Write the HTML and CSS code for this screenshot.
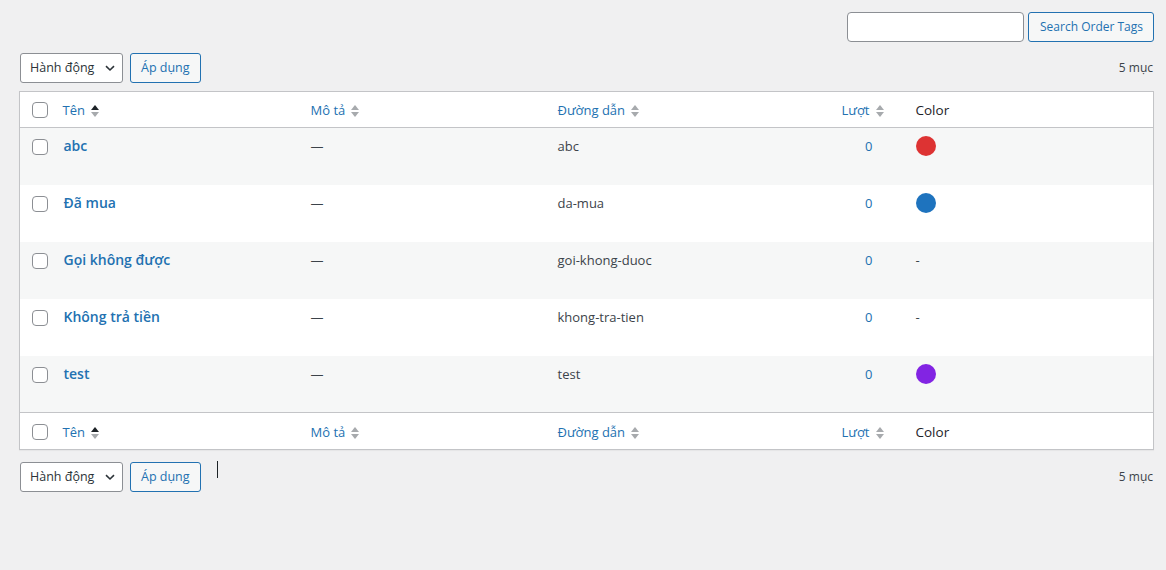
FILE: index.html
```html
<!DOCTYPE html>
<html lang="vi">
<head>
<meta charset="utf-8">
<title>Order Tags</title>
<link rel="stylesheet" href="styles.css">
</head>
<body>
<div class="wrap">
  <div class="search-box">
    <input class="search-input" type="search">
    <button class="button">Search Order Tags</button>
  </div>

  <div class="tablenav top">
    <div class="actions">
      <div class="select"><span>Hành động</span>
        <svg class="chev" width="10" height="10" viewBox="0 0 10 10"><path d="M1 3.2 5 7 9 3.2" fill="none" stroke="#2c3338" stroke-width="1.6"/></svg>
      </div>
      <button class="button apply">Áp dụng</button>
    </div>
    <div class="count">5 mục</div>
  </div>

  <table class="list">
    <colgroup>
      <col class="c-check"><col class="c-name"><col class="c-desc"><col class="c-slug"><col class="c-posts"><col class="c-color">
    </colgroup>
    <thead>
      <tr>
        <th class="check"><span class="cb"></span></th>
        <th><span class="sort">Tên <span class="arrows up-active"></span></span></th>
        <th><span class="sort">Mô tả <span class="arrows"></span></span></th>
        <th><span class="sort">Đường dẫn <span class="arrows"></span></span></th>
        <th class="num-h"><span class="sort">Lượt <span class="arrows"></span></span></th>
        <th class="plain">Color</th>
      </tr>
    </thead>
    <tbody>
      <tr class="alt">
        <td class="check"><span class="cb"></span></td>
        <td><a class="name">abc</a></td>
        <td>—</td>
        <td>abc</td>
        <td class="num"><a>0</a></td>
        <td class="color"><span class="dot red"></span></td>
      </tr>
      <tr>
        <td class="check"><span class="cb"></span></td>
        <td><a class="name">Đã mua</a></td>
        <td>—</td>
        <td>da-mua</td>
        <td class="num"><a>0</a></td>
        <td class="color"><span class="dot blue"></span></td>
      </tr>
      <tr class="alt">
        <td class="check"><span class="cb"></span></td>
        <td><a class="name">Gọi không được</a></td>
        <td>—</td>
        <td>goi-khong-duoc</td>
        <td class="num"><a>0</a></td>
        <td class="color">-</td>
      </tr>
      <tr>
        <td class="check"><span class="cb"></span></td>
        <td><a class="name">Không trả tiền</a></td>
        <td>—</td>
        <td>khong-tra-tien</td>
        <td class="num"><a>0</a></td>
        <td class="color">-</td>
      </tr>
      <tr class="alt">
        <td class="check"><span class="cb"></span></td>
        <td><a class="name">test</a></td>
        <td>—</td>
        <td>test</td>
        <td class="num"><a>0</a></td>
        <td class="color"><span class="dot purple"></span></td>
      </tr>
    </tbody>
    <tfoot>
      <tr>
        <th class="check"><span class="cb"></span></th>
        <th><span class="sort">Tên <span class="arrows up-active"></span></span></th>
        <th><span class="sort">Mô tả <span class="arrows"></span></span></th>
        <th><span class="sort">Đường dẫn <span class="arrows"></span></span></th>
        <th class="num-h"><span class="sort">Lượt <span class="arrows"></span></span></th>
        <th class="plain">Color</th>
      </tr>
    </tfoot>
  </table>

  <div class="tablenav bottom">
    <div class="actions">
      <div class="select"><span>Hành động</span>
        <svg class="chev" width="10" height="10" viewBox="0 0 10 10"><path d="M1 3.2 5 7 9 3.2" fill="none" stroke="#2c3338" stroke-width="1.6"/></svg>
      </div>
      <button class="button apply">Áp dụng</button>
      <span class="caret"></span>
    </div>
    <div class="count">5 mục</div>
  </div>
</div>
</body>
</html>
```

FILE: styles.css
```css
* { box-sizing: border-box; }
html, body { margin: 0; padding: 0; }
body {
  background: #f0f0f1;
  color: #3c434a;
  font-family: "Open Sans", "Noto Sans", sans-serif;
  font-size: 13px;
  line-height: 1.4;
}
.wrap {
  padding: 12px 12px 0 19px;
}
.search-box {
  display: flex;
  justify-content: flex-end;
  gap: 4px;
  height: 30px;
}
.search-input {
  width: 177px;
  height: 30px;
  border: 1px solid #8c8f94;
  border-radius: 4px;
  background: #fff;
  margin: 0;
  padding: 0 8px;
}
.button {
  height: 30px;
  padding: 0 10px 0 11px;
  border: 1px solid #2271b1;
  border-radius: 3px;
  background: #f6f7f7;
  color: #2271b1;
  font-family: inherit;
  font-size: 12px;
  line-height: 28px;
  margin: 0;
  white-space: nowrap;
}
.button.apply { padding: 0 10px; font-size: 12.5px; }
.tablenav {
  display: flex;
  justify-content: space-between;
  align-items: center;
  height: 30px;
  padding-left: 1px;
}
.tablenav.top { margin-top: 11px; margin-bottom: 8px; }
.tablenav.bottom { margin-top: 12px; }
.actions {
  display: flex;
  align-items: center;
  gap: 7px;
}
.select {
  display: flex;
  align-items: center;
  justify-content: space-between;
  width: 103px;
  height: 30px;
  padding: 0 7px 0 9px;
  border: 1px solid #8c8f94;
  border-radius: 3px;
  background: #fff;
  color: #2c3338;
  font-size: 12.5px;
  white-space: nowrap;
}
.chev { display: block; flex: none; }
.count {
  font-size: 12px;
  color: #3c434a;
  padding-right: 1px;
}
.caret {
  display: block;
  width: 1px;
  height: 17px;
  background: #1d2327;
  margin-left: 9px;
  align-self: flex-start;
  margin-top: -1px;
}
.list {
  width: 100%;
  border-collapse: collapse;
  table-layout: fixed;
  background: #fff;
  border: 1px solid #c3c4c7;
  box-shadow: 0 1px 1px rgba(0,0,0,.04);
}
.c-check { width: 33px; }
.c-name { width: 248px; }
.c-desc { width: 247px; }
.c-slug { width: 248px; }
.c-posts { width: 111px; }
th, td {
  text-align: left;
  font-weight: 400;
  padding: 8px 10px;
  line-height: 19px;
  vertical-align: top;
  font-size: 13px;
}
thead th { border-bottom: 1px solid #c3c4c7; padding-top: 9px; padding-bottom: 7px; }
tfoot th { border-top: 1px solid #c3c4c7; padding-top: 10px; padding-bottom: 7px; }
th .sort { color: #2271b1; display: inline-flex; align-items: center; }
th.plain { color: #1d2327; font-size: 13.5px; padding-left: 9px; }
td.color { padding-left: 9px; }
.check { padding: 8px 0 0 12px; }
thead th.check { padding-top: 10px; padding-bottom: 0; }
tfoot th.check { padding-top: 11px; padding-bottom: 0; }
td.check { padding-top: 11px; }
.cb {
  display: block;
  width: 16px;
  height: 16px;
  border: 1px solid #8c8f94;
  border-radius: 4px;
  background: #fff;
}
tbody tr { height: 57px; }
tbody td { padding-top: 9px; }
tbody tr.alt { background: #f6f7f7; }
a { color: #2271b1; text-decoration: none; }
a.name {
  display: inline-block;
  vertical-align: top;
  font-weight: 600;
  font-size: 14px;
  padding-left: 1px;
  line-height: 19px;
  margin-top: -1px;
}
td.num { text-align: right; padding-right: 34px; }
th.num-h { text-align: right; padding-right: 22px; }
.arrows {
  display: inline-block;
  position: relative;
  width: 10px;
  height: 14px;
  margin-left: 5px;
}
.arrows::before, .arrows::after {
  content: "";
  position: absolute;
  left: 1px;
  border-left: 4.5px solid transparent;
  border-right: 4.5px solid transparent;
}
.arrows::before { top: 1px; border-bottom: 5px solid #a7aaad; }
.arrows::after { top: 8px; border-top: 5px solid #a7aaad; }
.arrows.up-active::before { border-bottom-color: #1d2327; }
.dot {
  display: block;
  width: 20px;
  height: 20px;
  border-radius: 50%;
  margin-top: -1px;
}
.dot.red { background: #dd3333; }
.dot.blue { background: #1e73be; }
.dot.purple { background: #8224e3; }
```
